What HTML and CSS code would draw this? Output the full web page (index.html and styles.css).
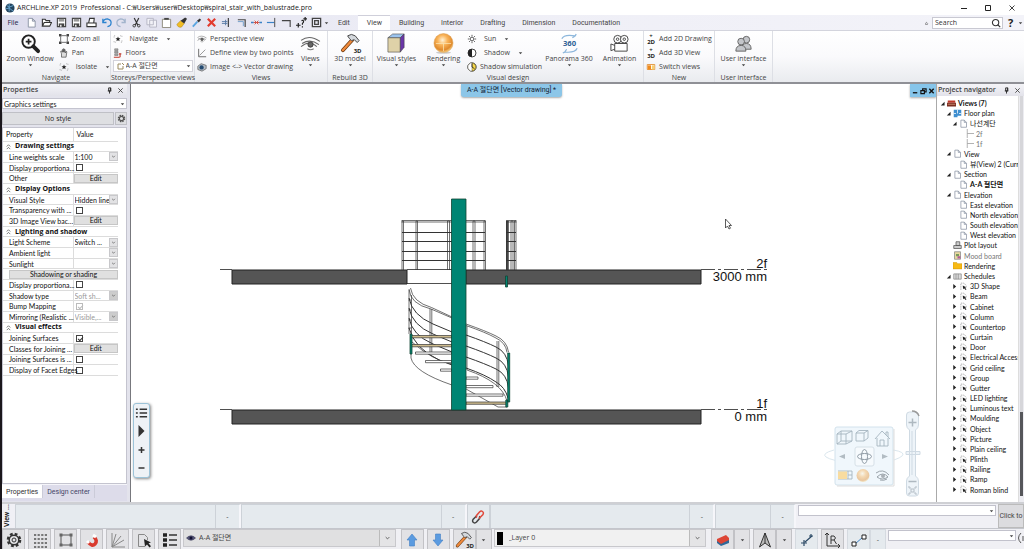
FILE: index.html
```html
<!DOCTYPE html>
<html lang="en">
<head>
<meta charset="utf-8">
<title>ARCHLine.XP 2019 Professional</title>
<link rel="stylesheet" href="styles.css">
</head>
<body>
<svg class="defs" aria-hidden="true">
  <defs>
    <radialGradient id="ball" cx=".45" cy=".35" r=".65"><stop offset="0" stop-color="#fff3d8"/><stop offset=".4" stop-color="#f9b45a"/><stop offset=".8" stop-color="#e08a2c"/><stop offset="1" stop-color="#f7d58a"/></radialGradient>
    <symbol id="car" viewBox="0 0 6 4"><path d="M1 1h4L3 3.4z" fill="#444"/></symbol>
    <symbol id="chev" viewBox="0 0 10 10"><path d="M3 4l2 2 2-2" fill="none" stroke="#555"/></symbol>
    <symbol id="dchev" viewBox="0 0 8 8"><path d="M2 4l2-2 2 2M2 7l2-2 2 2" fill="none" stroke="#444" stroke-width=".8"/></symbol>
    <symbol id="pin" viewBox="0 0 8 8"><path d="M3 1h2.500v3.500H3zM2 4.500h4M4 4.500V7.500M5 1v3" fill="none" stroke="#222"/></symbol>
    <symbol id="x" viewBox="0 0 8 8"><path d="M1.500 1.500l5 5M6.500 1.500l-5 5" fill="none" stroke="currentColor"/></symbol>
    <symbol id="doc" viewBox="0 0 10 12"><path d="M1.500 1.500h4.500l3 3v6.500h-7.500zM6 1.500v3h3" fill="#fff" stroke="#8a93a3"/></symbol>
    <symbol id="sch" viewBox="0 0 10 12"><path d="M1.500 10.500v-9h4l3 3v3" fill="#fff" stroke="#999" stroke-dasharray="2 1"/><path d="M4 4.500l.5 5 1.300-1.200 2 2.400 1.200-1-2-2.200 1.500-.5z" fill="#222"/></symbol>
    <symbol id="open" viewBox="0 0 6 6"><path d="M5.500 1v4.500h-4.500z" fill="#222"/></symbol>
    <symbol id="shut" viewBox="0 0 6 6"><path d="M1.500 0l3.500 3-3.500 3z" fill="#222"/></symbol>
    <symbol id="save" viewBox="0 0 12 12"><path d="M1.500 1.500h9v9h-9z" fill="#fff" stroke="#444" stroke-width="1.200"/><path d="M3 2h6v3H3z" fill="#999"/><path d="M3 7h6v4H3z" fill="#444"/><path d="M4.500 8.500h1.500v2h-1.500z" fill="#fff"/></symbol>
    <symbol id="hammer" viewBox="0 0 22 22"><path d="M3 18L13 7" stroke="#6b3a10" stroke-width="4" stroke-linecap="round"/><path d="M3 18L13 7" stroke="#f08a3c" stroke-width="2.500" stroke-linecap="round"/><path d="M8 3q4-3 8 0l4 5-2 2-3-3-3 1-2-2z" fill="#d4d8dc" stroke="#444"/></symbol>
    <symbol id="eye" viewBox="0 0 20 14"><path d="M1 4Q9-2 19 5M2 7Q10 2 18 8M1 10q8-7 15 0" fill="none" stroke="#666"/><circle cx="10" cy="8" r="2.500" fill="#666" stroke="#333" stroke-width=".8"/><path d="M7 12q3 2 6 0" fill="none" stroke="#777"/></symbol>
    <symbol id="iso" viewBox="0 0 14 12"><path d="M1.500 4V1.500H4M10 1.500h2.500V4M12.500 8v2.500H10M4 10.500H1.500V8" fill="none" stroke="#999" stroke-dasharray="1.500 1"/><path d="M7 2.500l1 2.400 2.500.1-2 1.600.8 2.600L7 7.800 4.700 9.200l.8-2.600-2-1.600L6 4.900z" fill="#222"/></symbol>
    <symbol id="list" viewBox="0 0 14 12"><path d="M1 2h2M1 6h2M1 10h2M5 2h8M5 6h8M5 10h8" stroke="#333" stroke-width="1.600"/></symbol>
    <symbol id="up" viewBox="0 0 16 16"><path d="M8 2l5 6h-2.500v6h-5V8H3z" fill="#5b9be0" stroke="#4380c4" stroke-width=".6"/></symbol>
  </defs>
</svg>

<div class="app">
<header class="title">
  <svg class="logo" viewBox="0 0 12 12"><circle cx="6" cy="6" r="5.500" fill="#24455f"/><path d="M2 3l3 2 5-2M1 7l4-1 5 4M5 1v9" stroke="#6fb2dd" fill="none"/></svg>
  <h1>ARCHLine.XP 2019&nbsp; Professional - C:₩Users₩user₩Desktop₩spiral_stair_with_balustrade.pro</h1>
  <div class="winbtns">
    <button aria-label="Minimize"><svg viewBox="0 0 8 8"><path d="M1 4.500h6" stroke="#222"/></svg></button>
    <button aria-label="Maximize"><svg viewBox="0 0 8 8"><path d="M1.500 1.500h5v5h-5z" fill="none" stroke="#222"/></svg></button>
    <button aria-label="Close"><svg><use href="#x"/></svg></button>
  </div>
</header>

<nav class="tabbar">
  <button class="file">File</button>
  <div class="quick">
    <button aria-label="New"><svg><use href="#doc"/></svg></button>
    <button aria-label="Open"><svg viewBox="0 0 12 12"><path d="M1.500 10V2.500h3l1 1.500h4v2M1.500 10l2-4h8l-2 4z" fill="#fff" stroke="#333" stroke-width="1.200"/></svg></button>
    <button aria-label="Save"><svg><use href="#save"/></svg></button>
    <button aria-label="Save as"><svg><use href="#save"/></svg></button>
    <button aria-label="Print"><svg viewBox="0 0 12 12"><path d="M3 6l1-4.500h5L8.500 6M1 6.500h10v4H1z" fill="#fff" stroke="#333" stroke-width="1.200"/></svg></button>
    <button aria-label="Undo"><svg viewBox="0 0 12 12"><path d="M2 2v4h4M2 6q1-4 5-4 4 1 4 4 0 4-4 4.500" fill="none" stroke="#2c83cf" stroke-width="1.400"/></svg></button>
    <button aria-label="Redo"><svg viewBox="0 0 12 12"><path d="M10 2v4H6M10 6Q9 2 5 2 1 3 1 6q0 4 4 4.500" fill="none" stroke="#a3b4cc" stroke-width="1.400"/></svg></button>
    <button aria-label="Cut"><svg viewBox="0 0 12 12"><path d="M3.500 1l4 8M8.500 1l-4 8" stroke="#333" stroke-width="1.300"/><circle cx="3.500" cy="9.500" r="1.400" fill="none" stroke="#333"/><circle cx="8.500" cy="9.500" r="1.400" fill="none" stroke="#333"/></svg></button>
    <button aria-label="Copy"><svg viewBox="0 0 12 12"><path d="M1 1.500h7v7H1zM4 3.500h7.500v7.500H4z" fill="#f2f2f8" stroke="#b5b5c3"/></svg></button>
    <button aria-label="Paste"><svg viewBox="0 0 12 12"><path d="M1.500 2.500h9v9h-9z" fill="#fff" stroke="#8a8577"/><path d="M3.500 1h5v2h-5z" fill="#444"/></svg></button>
    <button aria-label="Match properties"><svg viewBox="0 0 12 12"><path d="M1 8l4-4 4 3-3 4q-4 1-5-3" fill="#f1bd25" stroke="#a07a10" stroke-width=".5"/><path d="M5 4l4 3 3-5-2-1.500z" fill="#333"/></svg></button>
    <button aria-label="Pick"><svg viewBox="0 0 12 12"><path d="M2 10.500L7 5" stroke="#5aa5e0" stroke-width="2"/><path d="M6.500 4l2 2 2.500-3-1.500-1.500z" fill="#333"/></svg></button>
    <button aria-label="Delete"><svg viewBox="0 0 12 12"><path d="M2 2l8 8M10 2l-8 8" stroke="#e23b2e" stroke-width="2.400"/></svg></button>
    <button aria-label="Trim"><svg viewBox="0 0 12 12"><path d="M8 1v10" stroke="#333" stroke-width="1.200"/><path d="M1 5h6M1 7h6M5 3v6" stroke="#587aa5"/></svg></button>
    <button aria-label="Corner"><svg viewBox="0 0 12 12"><path d="M2 3h8v8" fill="none" stroke="#444" stroke-width="1.300"/><path d="M2 5h6v5" fill="none" stroke="#6e9cc8"/></svg></button>
    <button aria-label="Break"><svg viewBox="0 0 12 12"><path d="M0 6h3M9 6h3" stroke="#3b83c8" stroke-width="1.500"/><path d="M3 6h6M4 4l4 4M8 4l-4 4" stroke="#d04a3c"/></svg></button>
    <button aria-label="Extend"><svg viewBox="0 0 12 12"><path d="M1 6h8" stroke="#3b83c8" stroke-width="1.300"/><path d="M9.500 1v10" stroke="#444"/></svg></button>
    <button aria-label="Join"><svg viewBox="0 0 12 12"><path d="M1 4h9v7" fill="none" stroke="#444" stroke-width="1.200"/></svg></button>
    <button aria-label="Query"><svg viewBox="0 0 12 12"><path d="M0 9h5M2.500 6.500v5M8 2h4M10 0v4M6 4q3-1 2 2l-1 1v1.500M7 10v1.500" fill="none" stroke="#222" stroke-width="1.300"/></svg></button>
    <button aria-label="Frame"><svg viewBox="0 0 12 12"><path d="M1.500 1.500h9v9h-9zM4 4h4v4H4z" fill="none" stroke="#444" stroke-width="1.400"/></svg></button>
  </div>
  <svg class="car"><use href="#car"/></svg>
  <div class="tabs">
    <button>Edit</button><button class="on">View</button><button>Building</button><button>Interior</button><button>Drafting</button><button>Dimension</button><button>Documentation</button>
  </div>
  <div class="search">
    <svg class="car" viewBox="0 0 6 6"><path d="M1 4q2-4 4 0M1 5h4" fill="none" stroke="#555"/></svg>
    <div class="sbox"><input type="text" aria-label="Search" placeholder="Search"><svg viewBox="0 0 12 12"><circle cx="5.500" cy="5.500" r="3.800" fill="none" stroke="#333" stroke-width="1.300"/><path d="M8 8l3 3" stroke="#333" stroke-width="1.500"/></svg></div>
    <button class="help" aria-label="Help">?</button>
    <svg class="car"><use href="#car"/></svg>
  </div>
</nav>

<section class="ribbon">
  <div class="group g-nav">
    <div class="items">
      <button class="big"><svg viewBox="0 0 22 22"><circle cx="9" cy="9" r="6.500" fill="#fff" stroke="#222" stroke-width="2"/><path d="M9 6v6M6 9h6" stroke="#222" stroke-width="1.800"/><path d="M14 14l5 5" stroke="#222" stroke-width="4" stroke-linecap="round"/></svg>Zoom Window<svg class="car"><use href="#car"/></svg></button>
      <div class="stack">
        <button><svg viewBox="0 0 12 12"><path d="M2 3v6M10 3v6M3 2h6M3 10h6" stroke="#555"/><path d="M0 0h3v3H0zM9 0h3v3H9zM0 9h3v3H0zM9 9h3v3H9z" fill="#444"/></svg>Zoom all</button>
        <button><svg viewBox="0 0 12 12"><path d="M3 11V7L2 4l1-.5L4 5V2h1v3-4h1.200v4V2h1.200v4l1-2 1 .5L8.500 11z" fill="#ddd" stroke="#444" stroke-width=".8"/></svg>Pan</button>
        <button><svg><use href="#iso"/></svg><span class="pad">Isolate</span><svg class="car far"><use href="#car"/></svg></button>
      </div>
    </div>
    <h2>Navigate</h2>
  </div>
  <div class="group g-storey">
    <div class="items">
      <div class="stack">
        <button><svg><use href="#iso"/></svg><span class="pad">Navigate</span><svg class="car far"><use href="#car"/></svg></button>
        <button><svg viewBox="0 0 12 12"><path d="M2 1h4v2H2zM2 4h4v2H2zM2 7h4v2H2z" fill="#aaa" stroke="#666" stroke-width=".6"/><path d="M1 11h7M7 7h3M8.500 7v4" stroke="#c0392b" stroke-width="1.300"/></svg>Floors</button>
        <span class="combo storey"><svg class="lead" viewBox="0 0 10 10"><path d="M2 3v5h5V5M2 3h3M6 2l2 2" fill="none" stroke="#9a8a60"/></svg><select aria-label="Storey"><option>A-A 절단면</option></select><svg class="car arr"><use href="#car"/></svg></span>
      </div>
    </div>
    <h2>Storeys/Perspective views</h2>
  </div>
  <div class="group g-views">
    <div class="items">
      <div class="stack">
        <button><svg><use href="#eye"/></svg>Perspective view</button>
        <button><svg viewBox="0 0 12 12"><path d="M2 1v9.500h9" fill="none" stroke="#555"/><path d="M3 9l7-7" stroke="#888"/></svg>Define view by two points</button>
        <button><svg viewBox="0 0 12 12"><path d="M1 5l4-3 6 2v4l-5 3-5-2z" fill="#b9c0c8" stroke="#555" stroke-width=".8"/><circle cx="5.500" cy="6.500" r="2.600" fill="#244a70"/></svg>Image &lt;-&gt; Vector drawing</button>
      </div>
      <button class="big"><svg><use href="#eye"/></svg>Views<svg class="car"><use href="#car"/></svg></button>
    </div>
    <h2>Views</h2>
  </div>
  <div class="group g-rebuild">
    <div class="items">
      <button class="big"><span class="ham"><svg><use href="#hammer"/></svg><b>3D</b></span>3D model<svg class="car"><use href="#car"/></svg></button>
    </div>
    <h2>Rebuild 3D</h2>
  </div>
  <div class="group g-visual">
    <div class="items">
      <button class="big"><svg viewBox="0 0 22 22"><path d="M2 5l5-4h12l-4 4z" fill="#9cc4ee" stroke="#444" stroke-width=".6"/><path d="M2 5h13v15H2z" fill="#dfd2a8" stroke="#444" stroke-width=".6"/><path d="M15 5l4-4v14l-4 5z" fill="#6a35a8" stroke="#444" stroke-width=".6"/></svg>Visual styles<svg class="car"><use href="#car"/></svg></button>
      <button class="big"><svg viewBox="0 0 22 22"><ellipse cx="11" cy="20.500" rx="8" ry="1.300" fill="#ccc"/><circle cx="11" cy="10.500" r="10" fill="url(#ball)" stroke="#d99a4a" stroke-width=".5"/><path d="M3 11h16M11 11v8" stroke="#fbe3b0" stroke-width=".8"/></svg>Rendering<svg class="car"><use href="#car"/></svg></button>
      <div class="stack">
        <button><svg viewBox="0 0 12 12"><circle cx="6" cy="6" r="2.200" fill="none" stroke="#444"/><path d="M6 1v2M6 9v2M1 6h2M9 6h2M2.500 2.500l1.300 1.300M8.200 8.200l1.300 1.300M9.500 2.500L8.200 3.800M3.800 8.200L2.500 9.500" stroke="#444"/></svg><span class="pad">Sun</span><svg class="car far"><use href="#car"/></svg></button>
        <button><svg viewBox="0 0 12 12"><circle cx="6" cy="6" r="4.800" fill="#fff" stroke="#222"/><path d="M6 1.200a4.800 4.800 0 0 0 0 9.600z" fill="#222"/></svg><span class="pad">Shadow</span><svg class="car far"><use href="#car"/></svg></button>
        <button><svg viewBox="0 0 12 12"><circle cx="6" cy="6" r="5" fill="#f6d84a" stroke="#222"/><path d="M6 1a5 5 0 0 0 0 10z" fill="#fff" stroke="#444" stroke-width=".5"/><path d="M6 2v4l3 2" fill="none" stroke="#222"/></svg>Shadow simulation</button>
      </div>
      <button class="big pano"><svg viewBox="0 0 22 22"><path d="M3 6Q5 1 17 3M17 3l1-2M17 3l-3 2M19 16q-2 5-13 4M6 20l-2 1M6 20l2-3" fill="none" stroke="#8db7dc" stroke-width="1.300"/><text x="11" y="14" text-anchor="middle" class="t360">360</text></svg>Panorama 360<svg class="car"><use href="#car"/></svg></button>
      <button class="big"><svg viewBox="0 0 22 22"><g fill="#fff" stroke="#444"><path d="M6 11h13v8H6zM6 13l-4-1.500v7L6 17"/><circle cx="9" cy="6.500" r="4"/><circle cx="16" cy="6.500" r="4"/><circle cx="9" cy="6.500" r="1.300"/><circle cx="16" cy="6.500" r="1.300"/></g></svg>Animation<svg class="car"><use href="#car"/></svg></button>
    </div>
    <h2>Visual design</h2>
  </div>
  <div class="group g-new">
    <div class="items">
      <div class="stack">
        <button><b class="dim">+<br>2D</b>Add 2D Drawing</button>
        <button><b class="dim">+<br>3D</b>Add 3D View</button>
        <button><svg viewBox="0 0 12 12"><path d="M1.500 3h9v6h-9z" fill="#fff" stroke="#e08a2c"/><path d="M2 4h4v5H2z" fill="#f08a1c"/><path d="M7 4h3v5H7z" fill="#f5cf70"/></svg>Switch views</button>
      </div>
    </div>
    <h2>New</h2>
  </div>
  <div class="group g-ui">
    <div class="items">
      <button class="big"><svg viewBox="0 0 22 22"><g fill="#c4c6ca" stroke="#666"><circle cx="14" cy="7" r="3.500"/><path d="M9 17q0-6 5-6 5 0 5 6z"/><circle cx="8.500" cy="9" r="3.500"/><path d="M3 19q0-6 5.500-6 5 0 5 6z"/></g></svg>User interface<svg class="car"><use href="#car"/></svg></button>
    </div>
    <h2>User interface</h2>
  </div>
</section>

<main class="work">
  <aside class="props">
    <div class="phead"><h2>Properties</h2><svg><use href="#pin"/></svg><svg><use href="#x"/></svg></div>
    <span class="combo gs"><select aria-label="Settings group"><option>Graphics settings</option></select><svg class="car arr"><use href="#car"/></svg></span>
    <div class="style"><button>No style</button><button class="cog" aria-label="Style settings"><svg viewBox="0 0 12 12"><circle cx="6" cy="6" r="4" fill="none" stroke="#555" stroke-width="2" stroke-dasharray="2 1.140"/><circle cx="6" cy="6" r="2.800" fill="none" stroke="#555" stroke-width="1.500"/></svg></button></div>
    <div class="pbody">
    <table>
      <thead><tr><th>Property</th><th>Value</th></tr></thead>
      <tbody>
      <tr class="sec"><td colspan="2"><svg><use href="#dchev"/></svg>Drawing settings</td></tr>
      <tr><td>Line weights scale</td><td><span class="combo"><select aria-label="Line weights scale"><option>1:100</option></select><svg class="arr"><use href="#chev"/></svg></span></td></tr>
      <tr><td>Display proportiona...</td><td><input type="checkbox" aria-label="Display proportional"></td></tr>
      <tr><td>Other</td><td><button>Edit</button></td></tr>
      <tr class="sec"><td colspan="2"><svg><use href="#dchev"/></svg>Display Options</td></tr>
      <tr><td>Visual Style</td><td><span class="combo"><select aria-label="Visual Style"><option>Hidden line</option></select><svg class="arr"><use href="#chev"/></svg></span></td></tr>
      <tr><td>Transparency with ...</td><td><input type="checkbox" aria-label="Transparency"></td></tr>
      <tr><td>3D Image View bac...</td><td><button>Edit</button></td></tr>
      <tr class="sec"><td colspan="2"><svg><use href="#dchev"/></svg>Lighting and shadow</td></tr>
      <tr><td>Light Scheme</td><td><span class="combo"><select aria-label="Light Scheme"><option>Switch ...</option></select><svg class="arr"><use href="#chev"/></svg></span></td></tr>
      <tr><td>Ambient light</td><td><span class="combo"><select aria-label="Ambient light"><option></option></select><svg class="arr"><use href="#chev"/></svg></span></td></tr>
      <tr><td>Sunlight</td><td><span class="combo"><select aria-label="Sunlight"><option></option></select><svg class="arr"><use href="#chev"/></svg></span></td></tr>
      <tr class="wide"><td colspan="2"><button>Shadowing or shading</button></td></tr>
      <tr><td>Display proportiona...</td><td><input type="checkbox" aria-label="Display proportional shadow"></td></tr>
      <tr><td>Shadow type</td><td><span class="combo"><select aria-label="Shadow type" disabled><option>Soft sh...</option></select><svg class="arr off"><use href="#chev"/></svg></span></td></tr>
      <tr><td>Bump Mapping</td><td><input type="checkbox" aria-label="Bump Mapping" checked disabled></td></tr>
      <tr><td>Mirroring (Realistic ...</td><td><span class="combo"><select aria-label="Mirroring" disabled><option>Visible,...</option></select><svg class="arr off"><use href="#chev"/></svg></span></td></tr>
      <tr class="sec"><td colspan="2"><svg><use href="#dchev"/></svg>Visual effects</td></tr>
      <tr><td>Joining Surfaces</td><td><input type="checkbox" aria-label="Joining Surfaces" checked></td></tr>
      <tr><td>Classes for Joining ...</td><td><button>Edit</button></td></tr>
      <tr><td>Joining Surfaces is ...</td><td><input type="checkbox" aria-label="Joining Surfaces is"></td></tr>
      <tr><td>Display of Facet Edges</td><td><input type="checkbox" aria-label="Display of Facet Edges"></td></tr>
      </tbody>
    </table>
    </div>
    <div class="ptabs"><button class="on">Properties</button><button>Design center</button></div>
  </aside>

  <section class="canvas">
    <svg class="drawing" viewBox="131 84 805 418" preserveAspectRatio="xMidYMid meet">
      <g fill="#555" stroke="#222" stroke-width="1">
        <path d="M232 270h175v14H232zM466 270h235v14H466zM232 410h469v14H232z"/>
      </g>
      <path d="M407 269.500h45M407 283.500h45M220 269.500h12M220 409.500h12" stroke="#222" stroke-width=".8"/>
      <path d="M701 269.500h66M701 409.500h66" stroke="#222" stroke-width=".8" stroke-dasharray="14 3 3 3"/>
      <g fill="none" stroke="#333" stroke-width=".7">
        <path d="M402 270v-49h1.500v49M416 270v-49h1.500v49M447.500 270v-49h2v49M473 270v-49h2v49M484 270v-49h1.500v49M506.500 270v-49h2v49M511 270v-49h2v49M514.500 270v-49h1.500v49"/>
        <path d="M401.500 220.500h84M401.500 222h84M506 220.500h10.500M506 222h10.500"/>
        <path d="M402 232.500h83M402 241.500h83M402 251.500h83M402 260.500h83M506 232.500h10M506 241.500h10M506 251.500h10M506 260.500h10" stroke-width="1.200"/>
        <path d="M507 221v49" stroke-width="1.800"/>
        <path d="M409 289q1 15 22 20l21 9M410.500 288q2 14 21 19.500l20.500 9.500M466 324q20 7 30 12 11 5 12.500 16M466 325.500q20 7 29 12 11 5 12 15"/>
        <path d="M409 298q3 17 24 26l19 8M409 308q3 17 24 26l19 8M409 318q3 17 24 26l19 8M409 328q5 20 30 32l13 5M466 335q20 7 30 12 11 5 12.500 19M466 346q20 7 30 12 11 5 12.500 19M466 357q20 7 30 12 11 5 12.500 19M466 368q20 7 30 14 9 5 12 16" stroke-width="1"/>
        <path d="M409 290v44M411.500 295v40M408.500 300h3M408.500 310h3M408.500 320h3M408.500 328h3M430 309v43M431.800 309v43M497 341v46M498.800 341v46M467 326v44"/>
        <path d="M411 354v4q3 14 41 27M412 342q20 18 40 22M466 389l32 18h9M467 370q35 12 40 31"/>
        <path d="M415.500 352h36v2.200h-36zM425.500 360.500h26v2.200h-26zM440.500 369h11v2.200h-11zM466 377h12v2.200h-12zM466 385.500h27v2.200h-27zM466 394h37v2.200h-37z" fill="#fff"/>
        <path d="M411 335.500h41v2.300h-41zM411 344.500h41v2.300h-41zM466 402h41v2.300h-41z" fill="#cdbb8c"/>
      </g>
      <path d="M451.500 199h14.500v211h-14.500zM410 334h2v20h-2zM507.700 353h2v49h-2zM505.800 400h2v7h-2zM505.500 276h2v11h-2z" fill="#008573" stroke="#143" stroke-width=".8"/>
      <g class="dimtext" text-anchor="end"><text x="767" y="268">2f</text><text x="767" y="281">3000 mm</text><text x="767" y="408">1f</text><text x="767" y="421">0 mm</text></g>
      <path d="M725.500 219v9l2-2 1.500 3 1.500-.8-1.500-2.700h2.500z" fill="#fff" stroke="#333" stroke-width=".8"/>
    </svg>
    <div class="doctab">A-A 절단면 [Vector drawing] *</div>
    <div class="docbtns">
      <button aria-label="Minimize view"><svg viewBox="0 0 8 8"><path d="M1 6h5" stroke="#111" stroke-width="1.500"/></svg></button>
      <button aria-label="Restore view"><svg viewBox="0 0 8 8"><path d="M1 3.500h4v3.500H1zM3 3V1.500h4V5H5" fill="none" stroke="#111" stroke-width="1.300"/></svg></button>
      <button aria-label="Close view"><svg viewBox="0 0 8 8"><path d="M1.500 1.500l5 5M6.500 1.500l-5 5" stroke="#111" stroke-width="1.600"/></svg></button>
    </div>
    <div class="floatbar">
      <button aria-label="List"><svg><use href="#list"/></svg></button>
      <button aria-label="Play"><svg viewBox="0 0 12 12"><path d="M3 0l6 6-6 6z" fill="#333"/></svg></button>
      <button aria-label="Add"><svg viewBox="0 0 12 12"><path d="M2 6h8M6 2v8" stroke="#333" stroke-width="2"/></svg></button>
      <button aria-label="Remove"><svg viewBox="0 0 12 12"><path d="M2 6h8" stroke="#333" stroke-width="2"/></svg></button>
    </div>
    <svg class="viewpad" viewBox="822 408 100 92">
      <g fill="none" stroke="#dbe7ee"><path d="M834 450q-26 7 20 14M875 448q44 3 19 12"/></g>
      <rect x="835" y="427" width="58" height="58" rx="2" fill="#f0f7fc" stroke="#d2e2ec"/>
      <path d="M894 429v57h-57" fill="none" stroke="#ddd"/>
      <g fill="none" stroke="#a5b4bf" stroke-width=".9">
        <path d="M837 434h9v10h-9zM841 431h11v10h-5M837 434l4-3M846 434l6-3M846 444l6-3M841 431v10M837 444l4-3h6M856 433h8v8h-8zM856 433l3-2.500h9V438l-4 3M864 433l4-2.500"/>
        <path d="M875 439l7-8 8 8M877 438v8h11v-8M880 446v-6h4v6M886 435v-3h2v5"/>
        <path d="M838 471h14v8h-14M848 471v8M848 475h4"/>
      </g>
      <rect x="855" y="447" width="19" height="19" rx="2" fill="#f6fafd" stroke="#d6e0e7"/>
      <g fill="none" stroke="#8f9ba5"><ellipse cx="864.500" cy="456.500" rx="7" ry="3"/><ellipse cx="864.500" cy="456.500" rx="3" ry="7"/></g>
      <path d="M845 454v5l-6-2.500zM882 454v5l6-2.500z" fill="#b2bcc3"/>
      <path d="M838 471.500h9v7.500h-9z" fill="#f8dca0"/>
      <circle cx="863" cy="475.500" r="6.500" fill="url(#ball)" opacity=".45"/>
      <path d="M876 473q7-5 13 2M877 477q6-6 11 0-6 4-11 0M880 480q4 1 7-1" fill="none" stroke="#9aa3aa"/><circle cx="883" cy="476" r="2" fill="#a9b0b6"/>
      <g fill="#eef4f9" stroke="#cfdae3"><path d="M906.500 415q0-3 3-3h6q3 0 3 3v10q0 3-3 5v46q3 2 3 5v12q0 3-3 3h-6q-3 0-3-3v-12q0-3 3-5v-46q-3-2-3-5zM912 431v44M906 451.500h14v3h-14z"/></g>
      <path d="M908.500 422.500h8M912.500 418.500v8M908.500 481.500h8" stroke="#aeb8c0" stroke-width="1.500"/>
      <path d="M909 486v2h2M916 486v2h-2M909 495v-2h2M916 495v-2h-2M911 489h3v3h-3z" fill="none" stroke="#b5bec6"/>
      <path d="M912 411q5 0 7 5" fill="none" stroke="#999" stroke-width="1.500"/>
    </svg>
  </section>

  <aside class="navi">
    <div class="phead"><h2>Project navigator</h2><svg><use href="#pin"/></svg><svg><use href="#x"/></svg></div>
    <div class="treebox">
    <ul class="tree">
      <li class="l0 bold"><svg class="tw"><use href="#open"/></svg><svg viewBox="0 0 12 12"><path d="M1 2h10v3H1z" fill="#c0392b"/><path d="M0 5h12v5H0z" fill="#7b2d20"/><path d="M1 7h10" stroke="#d9a080"/></svg>Views (7)</li>
      <li class="l1"><svg class="tw"><use href="#open"/></svg><svg viewBox="0 0 12 12"><path d="M1 1h10v8H6v2H1z" fill="#3f8fd0"/><path d="M6 1v5M1 6h3M8 6h3" stroke="#fff"/></svg>Floor plan</li>
      <li class="l2"><svg class="tw"><use href="#open"/></svg><svg><use href="#doc"/></svg>나선계단</li>
      <li class="l3 dimmed"><svg viewBox="0 0 12 12"><path d="M3 0v12M3 6h9" stroke="#999"/></svg>2f</li>
      <li class="l3 dimmed"><svg viewBox="0 0 12 12"><path d="M3 0v12M3 6h9" stroke="#999"/></svg>1f</li>
      <li class="l1"><svg class="tw"><use href="#open"/></svg><svg><use href="#doc"/></svg>View</li>
      <li class="l2"><i class="tw"></i><svg><use href="#doc"/></svg>뷰(View) 2 (Curr</li>
      <li class="l1"><svg class="tw"><use href="#open"/></svg><svg><use href="#doc"/></svg>Section</li>
      <li class="l2 bold"><i class="tw"></i><svg><use href="#doc"/></svg>A-A 절단면</li>
      <li class="l1"><svg class="tw"><use href="#open"/></svg><svg><use href="#doc"/></svg>Elevation</li>
      <li class="l2"><i class="tw"></i><svg><use href="#doc"/></svg>East elevation</li>
      <li class="l2"><i class="tw"></i><svg><use href="#doc"/></svg>North elevation</li>
      <li class="l2"><i class="tw"></i><svg><use href="#doc"/></svg>South elevation</li>
      <li class="l2"><i class="tw"></i><svg><use href="#doc"/></svg>West elevation</li>
      <li class="l1"><i class="tw"></i><svg viewBox="0 0 12 12"><path d="M4 1h5v5H4zM1 6h10v4H1z" fill="#ccc" stroke="#555"/></svg>Plot layout</li>
      <li class="l1 dimmed"><i class="tw"></i><svg viewBox="0 0 12 12"><path d="M2 1h8v10H2z" fill="#e8d9a0" stroke="#888"/><path d="M4 4h4v3H4z" fill="#7a9a5a"/><path d="M6 7h4v3H6z" fill="#b05a9a"/></svg>Mood board</li>
      <li class="l1"><i class="tw"></i><svg viewBox="0 0 12 12"><path d="M0 2h5l1 1.500h6V10.500H0z" fill="#f7b914" stroke="#c98f00" stroke-width=".6"/></svg>Rendering</li>
      <li class="l1"><svg class="tw"><use href="#open"/></svg><svg viewBox="0 0 12 12"><path d="M1 2.500h10v7H1zM4 2.500v7M7 2.500v7" fill="#ddd" stroke="#888"/></svg>Schedules</li>
      <li class="l2"><svg class="tw"><use href="#shut"/></svg><svg><use href="#sch"/></svg>3D Shape</li>
      <li class="l2"><svg class="tw"><use href="#shut"/></svg><svg><use href="#sch"/></svg>Beam</li>
      <li class="l2"><svg class="tw"><use href="#shut"/></svg><svg><use href="#sch"/></svg>Cabinet</li>
      <li class="l2"><svg class="tw"><use href="#shut"/></svg><svg><use href="#sch"/></svg>Column</li>
      <li class="l2"><svg class="tw"><use href="#shut"/></svg><svg><use href="#sch"/></svg>Countertop</li>
      <li class="l2"><svg class="tw"><use href="#shut"/></svg><svg><use href="#sch"/></svg>Curtain</li>
      <li class="l2"><svg class="tw"><use href="#shut"/></svg><svg><use href="#sch"/></svg>Door</li>
      <li class="l2"><svg class="tw"><use href="#shut"/></svg><svg><use href="#sch"/></svg>Electrical Access</li>
      <li class="l2"><svg class="tw"><use href="#shut"/></svg><svg><use href="#sch"/></svg>Grid ceiling</li>
      <li class="l2"><svg class="tw"><use href="#shut"/></svg><svg><use href="#sch"/></svg>Group</li>
      <li class="l2"><svg class="tw"><use href="#shut"/></svg><svg><use href="#sch"/></svg>Gutter</li>
      <li class="l2"><svg class="tw"><use href="#shut"/></svg><svg><use href="#sch"/></svg>LED lighting</li>
      <li class="l2"><svg class="tw"><use href="#shut"/></svg><svg><use href="#sch"/></svg>Luminous text</li>
      <li class="l2"><svg class="tw"><use href="#shut"/></svg><svg><use href="#sch"/></svg>Moulding</li>
      <li class="l2"><svg class="tw"><use href="#shut"/></svg><svg><use href="#sch"/></svg>Object</li>
      <li class="l2"><svg class="tw"><use href="#shut"/></svg><svg><use href="#sch"/></svg>Picture</li>
      <li class="l2"><svg class="tw"><use href="#shut"/></svg><svg><use href="#sch"/></svg>Plain ceiling</li>
      <li class="l2"><svg class="tw"><use href="#shut"/></svg><svg><use href="#sch"/></svg>Plinth</li>
      <li class="l2"><svg class="tw"><use href="#shut"/></svg><svg><use href="#sch"/></svg>Railing</li>
      <li class="l2"><svg class="tw"><use href="#shut"/></svg><svg><use href="#sch"/></svg>Ramp</li>
      <li class="l2"><svg class="tw"><use href="#shut"/></svg><svg><use href="#sch"/></svg>Roman blind</li>
    </ul>
    <div class="scroll"><i class="track"></i><i class="thumb"></i></div>
    </div>
  </aside>
</main>

<section class="dock">
  <span class="vlabel">View ...</span>
  <div class="cell c1"></div><div class="cell c2">-</div>
  <div class="cell c3"></div><div class="cell c2">-</div>
  <button class="cell link" aria-label="Link"><svg viewBox="0 0 14 14"><g fill="none" stroke-width="1.500"><path d="M6 5.500l-4 4q-1 2 .5 3 1.500 1 3-.5l3-3.500q.5-1.500-.5-2" stroke="#444"/><path d="M8 8.500l4-4q1-2-.5-3-1.500-1-3 .5L5.500 5.500q-.5 1.500.5 2" stroke="#e04a3c"/></g></svg></button>
  <div class="cell c4"></div><div class="cell c2">-</div>
  <div class="cell c5"></div><div class="cell c2">-</div>
  <div class="cmd"><span class="combo"><select aria-label="Command"><option></option></select><svg class="car arr"><use href="#car"/></svg></span></div>
  <button class="click">Click to</button>
</section>

<footer class="status">
  <div class="tools">
    <button aria-label="Settings"><svg viewBox="0 0 16 16"><circle cx="8" cy="8" r="6" fill="none" stroke="#333" stroke-width="2.600" stroke-dasharray="2.700 2.010"/><circle cx="8" cy="8" r="4.800" fill="none" stroke="#333" stroke-width="1.500"/><circle cx="8" cy="8" r="2" fill="none" stroke="#333"/></svg></button>
    <button aria-label="Grid"><svg viewBox="0 0 16 16"><path d="M2 3h13M2 7h13M2 11h13M2 15h13" stroke="#777" stroke-width="2" stroke-dasharray="2.200 1.400"/></svg></button>
    <button aria-label="Bounds"><svg viewBox="0 0 16 16"><path d="M3 3h10v10H3z" fill="none" stroke="#555"/><path d="M1.500 1.500h3v3h-3zM11.500 1.500h3v3h-3zM1.500 11.500h3v3h-3zM11.500 11.500h3v3h-3z" fill="#666"/></svg></button>
    <button aria-label="Snap"><svg viewBox="0 0 16 16"><path d="M4 10q4 5 7 2t-1-7" fill="none" stroke="#d93a2e" stroke-width="3.500"/><path d="M3 9l2 2M9 3l3 2" stroke="#fff" stroke-width="3"/></svg></button>
    <button aria-label="Angles"><svg viewBox="0 0 16 16"><path d="M2 1v14h13M2 15L6 2M2 15L11 4M2 15l12-7" fill="none" stroke="#888"/></svg></button>
    <button aria-label="Select"><svg viewBox="0 0 16 16"><path d="M9 14.500H2.500v-12h6l3 3V8" fill="none" stroke="#888"/><path d="M8 7l1 7.500 2-2 2.500 3 1.500-1.200-2.500-3 2.500-.8z" fill="#222"/></svg></button>
    <button aria-label="Layers"><svg viewBox="0 0 16 16"><path d="M1 3h4M1 8h4M1 13h4" stroke="#222" stroke-width="3.500"/><path d="M7 3h8M7 8h8M7 13h8" stroke="#333" stroke-width="1.500"/></svg></button>
  </div>
  <span class="combo viewsel"><svg class="lead" viewBox="0 0 20 14"><path d="M1 7q9-9 18 0-9 9-18 0" fill="#557" stroke="#224"/><circle cx="10" cy="7" r="3" fill="#113"/></svg><select aria-label="Current view"><option>A-A 절단면</option></select><svg class="arr"><use href="#chev"/></svg></span>
  <div class="tools">
    <button aria-label="Up"><svg><use href="#up"/></svg></button>
    <button aria-label="Down"><svg class="flip"><use href="#up"/></svg></button>
    <button aria-label="Rebuild 3D"><span class="ham"><svg><use href="#hammer"/></svg><b>3D</b></span></button>
    <button class="nar" aria-label="More rebuild"><svg><use href="#car"/></svg></button>
  </div>
  <span class="combo layer"><i class="sw"></i><select aria-label="Layer"><option>_Layer 0</option></select><svg class="arr"><use href="#chev"/></svg></span>
  <div class="tools">
    <button aria-label="Erase"><svg viewBox="0 0 16 16"><path d="M2 8l9-4 3 3v4l-8 3-4-3z" fill="#2f6a9a"/><path d="M2 7l9-4 3 3v2l-8 4-4-3z" fill="#dd4636"/></svg></button>
    <button class="nar" aria-label="More erase"><svg><use href="#car"/></svg></button>
    <button aria-label="North"><svg viewBox="0 0 16 16"><path d="M8 1l5.500 14L8 11l-5.500 4zM8 1v10" fill="#bbb" stroke="#333"/></svg></button>
    <button class="nar" aria-label="More north"><svg><use href="#car"/></svg></button>
    <button class="flat" aria-label="Points"><svg viewBox="0 0 16 16"><path d="M5 8v6M2 11h6M6 10l7-6M10 4h4M12 2v4" stroke="#2c4a66" stroke-width="1.200"/></svg></button>
    <button aria-label="Relative"><svg viewBox="0 0 16 16"><path d="M2 1v13h13M0 3l2-2 2 2M13 12l2 2-2 2M6 12V4h3q3 2 0 4H6M9 8l2.500 4" fill="none" stroke="#333"/></svg></button>
    <button class="flat" aria-label="Segment"><svg viewBox="0 0 16 16"><path d="M4 12l8-7" stroke="#3b83c8"/><path d="M1 10h4v4H1zM11 3h4v4h-4z" fill="#fff" stroke="#222"/></svg></button>
    <button class="nar flat" aria-label="More segment">-</button>
  </div>
  <div class="coord"><span class="combo"><select aria-label="Coordinate"><option></option></select><svg class="car arr"><use href="#car"/></svg></span></div>
  <svg class="edge" viewBox="0 0 8 12"><path d="M5 1Q0 6 5 11M7 4v5" fill="none" stroke="#555"/></svg>
</footer>
</div>
</body>
</html>
```

FILE: styles.css
```css
* { box-sizing: border-box; }
html, body { height: 100%; }
body { margin: 0; font: 7px/10px "Open Sans", "Noto Sans CJK KR", sans-serif; color: #444; background: #fff; overflow: hidden; }
h1, h2 { margin: 0; font: inherit; }
button, input, select { font: inherit; color: inherit; margin: 0; padding: 0; border: 0; background: none; }
button { display: flex; align-items: center; justify-content: center; white-space: nowrap; }
svg { display: block; flex: none; width: 10px; height: 10px; }
select { appearance: none; width: 100%; min-width: 0; outline: 0; opacity: 1; }
.defs { position: absolute; width: 0; height: 0; }
.car { width: 5px; height: 4px; }

.app { display: flex; flex-direction: column; height: 100vh; border-left: 2px solid #1b171c; }

/* title */
.title { display: flex; align-items: center; gap: 2px; height: 15px; padding-left: 3px; }
.title .logo { width: 10px; }
.title h1 { flex: 1; color: #222; }
.winbtns { display: flex; }
.winbtns button { width: 24px; }
.winbtns svg { width: 8px; height: 8px; }

/* tab bar */
.tabbar { display: flex; align-items: center; height: 16px; background: linear-gradient(90deg, #dcdcec, #eeeef6 40%, #f3f3f9); border-bottom: 1px solid #d3d4dd; }
.file { width: 22px; color: #224; }
.quick { display: flex; }
.quick button { width: 15px; height: 15px; }
.quick svg { width: 11px; height: 11px; }
.tabs { display: flex; align-self: stretch; flex: 1; font-family: Roboto, sans-serif; }
.tabs button { padding: 0 8px 0 9px; border: 1px solid transparent; border-width: 1px 0 0; }
.tabs .on { background: #fff; border-color: #cfcfda; }
.search { display: flex; align-items: center; gap: 3px; padding-right: 1px; }
.sbox { display: flex; align-items: center; width: 71px; height: 12px; background: #fff; border: 1px solid #c9c9d2; padding: 0 1px 0 2px; }
.sbox input { width: 100%; min-width: 0; height: 10px; }
.sbox input::placeholder { color: #333; opacity: 1; }
.help { width: 9px; font: bold 11px/12px "Open Sans", sans-serif; color: #222; }

/* ribbon */
.ribbon { display: flex; height: 53px; background: linear-gradient(#fff, #fafafc 50%, #e9ebef); border-bottom: 2px solid #8f9096; }
.group { display: flex; flex-direction: column; border-right: 1px solid #dddfe5; padding-top: 1px; }
.group h2 { text-align: center; white-space: nowrap; }
.items { display: flex; justify-content: center; height: 41px; flex: none; }
.stack { display: grid; grid-template-rows: repeat(3, 13px); align-content: center; gap: 1px; }
.stack button { gap: 3px; justify-content: flex-start; }
.pad { padding-left: 4px; }
.far { margin-left: 5px; }
.big { flex-direction: column; justify-content: flex-start; flex: 1; padding-top: 1px; }
.big > svg:first-child, .big .ham { width: 21px; height: 21px; }
.big .car { margin-top: -1px; }
.ham { position: relative; display: block; width: 18px; height: 18px; }
.ham svg { width: 100%; height: 100%; }
.ham b { position: absolute; right: -1px; bottom: 0; font: bold 6px/6px "Open Sans", sans-serif; color: #222; }
.dim { width: 10px; font: bold 6px/6px "Open Sans", sans-serif; text-align: center; color: #222; }
.t360 { font: bold 8px "Open Sans", sans-serif; fill: #2f6296; }
.g-nav { width: 109px; }
.g-nav .big { flex: 0 0 57px; }
.g-nav .stack { flex: 1; }
.g-storey { width: 84px; }
.g-storey .stack { width: 80px; }
.storey { border: 1px solid #d2d2da; height: 12px; background: #fff; }
.g-views { width: 133px; }
.g-views .stack { padding-left: 2px; }
.g-rebuild { width: 45px; }
.g-visual { width: 271px; }
.g-visual .stack { flex: 0 0 72px; }
.g-visual .pano { flex: 0 0 54px; }
.g-new { width: 71px; }
.g-ui { width: 58px; }

/* drop-down with an arrow over its right end */
.combo { display: flex; align-items: center; background: #fff; }
.combo .arr { margin-right: 1px; pointer-events: none; }
.combo .lead { margin-left: 2px; }

/* body */
.work { display: flex; flex: 1; min-height: 0; }
.phead { display: flex; align-items: center; gap: 4px; height: 12px; padding: 0 3px 0 1px; background: linear-gradient(#f4f4f8, #e2e2ea); }
.phead h2 { flex: 1; font-weight: 600; white-space: nowrap; }
.phead svg { width: 7px; height: 7px; }

.props { display: flex; flex-direction: column; width: 129px; background: #e3e3ec; border-right: 1px solid #77787d; padding-right: 3px; }
.gs { height: 11px; border: 1px solid #c4c4cf; margin-top: 2px; padding-left: 1px; font-family: Lato, sans-serif; color: #222; }
.style { display: flex; gap: 1px; margin: 3px 0 2px; height: 13px; }
.style button { flex: 1; background: #dedfe2; border: 1px solid #bfc0c6; color: #222; }
.style .cog { flex: 0 0 12px; }
.style svg { width: 9px; height: 9px; }
.pbody { flex: 1; min-height: 0; background: #fff; border: 1px solid #c4c4cf; padding-right: 8px; font-family: Lato, sans-serif; }
.props table { width: 100%; height: 248px; table-layout: fixed; border-collapse: collapse; color: #111; }
.props th { font-weight: 400; text-align: left; padding: 0 3px; height: 13px; border-bottom: 1px solid #dcdcdc; }
.props th:first-child { width: 70px; border-right: 1px solid #dcdcdc; }
.props td { padding: 0; border-bottom: 1px solid #dcdcdc; line-height: 8px; height: 10px; white-space: nowrap; }
.props td:first-child { padding: 0 0 0 6px; border-right: 1px solid #dcdcdc; }
.props td .combo { height: 9px; }
.props td select { padding-left: 1px; line-height: 8px; }
.props td select:disabled { color: #999; }
.props td .arr { width: 9px; height: 9px; margin: 0; background: #e2e2e4; border: 1px solid #c8c8cb; }
.props td .off { background: #ccc; }
.props td button { width: 100%; height: 9px; background: #e0e0e0; border: 1px solid #c6c6c6; line-height: 7px; }
.props .sec td:first-child { padding-left: 2px; font-weight: 700; font-family: "Open Sans", sans-serif; border-right: 0; }
.sec svg { display: inline-block; width: 7px; height: 7px; margin-right: 3px; vertical-align: middle; }
.props .wide td:first-child { border-right: 0; }
.props input { appearance: none; display: block; width: 7px; height: 7px; margin-left: 2px; border: 1px solid #444; background: #fff; }
.props input:checked::after { content: ""; display: block; width: 4px; height: 2px; margin: 1px 0 0 1px; border: solid #333; border-width: 0 0 1px 1px; transform: rotate(-45deg); }
.props input:disabled { border-color: #bbb; }
.props input:disabled::after { border-color: #bbb; }
.ptabs { display: flex; height: 17px; margin-bottom: 1px; border-top: 1px solid #f5f5fa; background: #dddcea; font-family: Roboto, sans-serif; }
.ptabs button { padding: 0 4px; height: 13px; border-right: 1px solid #cbcbd8; color: #446; }
.ptabs .on { background: #fff; color: #333; }

.canvas { position: relative; flex: 1; min-width: 0; background: #fff; }
.drawing { width: 100%; height: 100%; }
.dimtext { font: 13px "Liberation Sans", Arial, sans-serif; fill: #111; }
.doctab { position: absolute; top: 0; left: 41%; width: 101px; height: 13px; line-height: 12px; text-align: center; white-space: nowrap; color: #123; background: #8cc6e8; border-radius: 0 0 3px 3px; box-shadow: 0 1px 2px #aaa; font-family: Roboto, "Noto Sans CJK KR", sans-serif; }
.docbtns { position: absolute; top: 0; right: 0; display: flex; padding: 1px; height: 13px; background: #86c5ea; box-shadow: 0 1px 2px #aaa; }
.docbtns button { width: 8px; }
.docbtns svg { width: 7px; height: 8px; }
.floatbar { position: absolute; left: 2px; bottom: 24px; display: grid; align-content: space-around; width: 17px; height: 75px; background: #eef2f6; border: 1px solid #9cc3d8; border-radius: 3px; box-shadow: 1px 1px 3px #888; }
.floatbar button { width: 15px; }
.floatbar svg { width: 13px; height: 12px; }
.floatbar button:nth-child(n+3) svg { width: 9px; }
.viewpad { position: absolute; right: 14px; bottom: 2px; width: 100px; height: 92px; }

.navi { display: flex; flex-direction: column; width: 88px; border-left: 1px solid #aaa; background: #ececf1; }
.treebox { display: flex; flex: 1; min-height: 0; }
.tree { flex: 1; min-width: 0; display: flex; flex-direction: column; margin: 0; padding: 2px 0 7px 1px; list-style: none; background: #fff; overflow: hidden; color: #111; font-family: Lato, "Noto Sans CJK KR", sans-serif; }
.tree li { display: flex; flex: 1; min-height: 0; align-items: center; gap: 2px; white-space: nowrap; }
.tree svg { width: 9px; height: 9px; }
.tree .tw { width: 5px; height: 5px; flex: none; }
.l0 { padding-left: 2px; }
.l1 { padding-left: 8px; }
.l2 { padding-left: 14px; }
.l3 { padding-left: 27px; }
.bold { font-weight: 700; }
.tree .dimmed { color: #777; }
.scroll { display: flex; flex-direction: column; width: 6px; padding: 0 1px; border-left: 1px solid #ddd; }
.scroll .track { flex: 79; background: #d6d6da; }
.scroll .thumb { flex: 21; background: #55565a; margin-bottom: 6px; }

/* bottom rows */
.dock { display: flex; height: 26px; border-top: 2px solid #cfd0d4; background: #f0f0f5; }
.vlabel { writing-mode: vertical-rl; transform: rotate(180deg); width: 13px; text-align: center; font-family: Roboto, sans-serif; font-weight: 500; color: #111; white-space: nowrap; }
.cell { display: flex; align-items: center; justify-content: center; background: #e5eaee; border-left: 1px solid #cdd2d8; border-top: 1px solid #cdd2d8; }
.c1, .c3, .c4 { flex: 199; }
.c2 { width: 26px; border-right: 2px solid #f6f6fa; }
.c5 { flex: 54; }
.link { width: 23px; border-right: 1px solid #cdd2d8; }
.link svg { width: 14px; height: 14px; }
.cmd { flex: 198; padding: 1px 2px; }
.cmd .combo { height: 11px; border: 1px solid #c2c2cc; }
.click { flex: 0 0 26px; background: #dcdcdf; border: 1px solid #bbb; font-family: Roboto, sans-serif; }
.status { display: flex; height: 21px; overflow: hidden; background: #f0f0f4; border-top: 1px solid #c4c6cc; }
.tools { display: flex; gap: 3px; padding-right: 2px; }
.tools button { width: 23px; height: 22px; background: #e2e2e5; border: 1px solid #c2c2c6; }
.tools button > svg { width: 16px; height: 16px; }
.tools .nar { width: 16px; margin-left: -3px; }
.tools .nar > svg { width: 5px; height: 4px; }
.tools .flat { background: #e5eaee; border-color: #d5dae0; }
.flip { transform: rotate(180deg); }
.viewsel, .layer { flex: 1; height: 18px; background: #e0e0e1; border: 1px solid #c8c8cc; margin-right: 5px; }
.viewsel .arr, .layer .arr { width: 16px; height: 16px; margin: 0; padding: 3px; background: #e4e4e6; border-left: 1px solid #bbb; }
.viewsel select, .layer select { padding-left: 3px; }
.layer { background: #f1f1f1; }
.sw { flex: none; width: 6px; height: 13px; margin-left: 2px; background: #000; }
.layer select { padding-left: 6px; }
.coord { flex: 0 0 128px; padding-top: 1px; }
.coord .combo { height: 11px; border: 1px solid #c2c2cc; }
.edge { width: 8px; height: 18px; }
```
